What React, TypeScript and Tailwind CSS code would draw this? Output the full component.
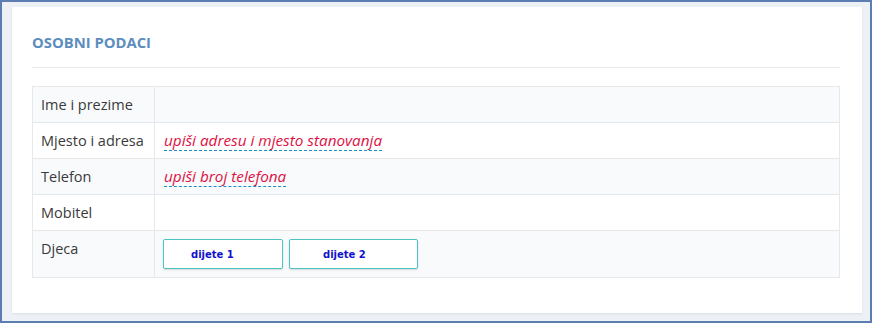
import React from 'react';

const rows = [
    { label: 'Ime i prezime', value: null },
    { label: 'Mjesto i adresa', value: 'upiši adresu i mjesto stanovanja' },
    { label: 'Telefon', value: 'upiši broj telefona' },
    { label: 'Mobitel', value: null },
];

const App: React.FC = () => {
    return (
        <div className="w-[872px] h-[323px] border-2 border-[#5b7db1] bg-[#edf1f5] pl-[10px] pt-[5px] overflow-hidden" style={{ fontFamily: '"Open Sans", sans-serif' }}>
            <div className="w-[850px] h-[306px] bg-white shadow-[0_1px_2px_rgba(0,0,0,0.08)] pl-[20px] pr-[22px] pt-[25px]">
                {/* Naslov */}
                <h2 className="text-[14.8px] leading-[20px] font-bold text-[#5b8dbe]">OSOBNI PODACI</h2>
                <div className="mt-[15px] h-px bg-[#e8ebee]" />

                {/* Tablica */}
                <table className="mt-[18px] w-full border-collapse border border-[#e6e9ec] text-[14.5px] text-[#3a3a3a]">
                    <tbody>
                        {rows.map((row, i) => (
                            <tr key={row.label} className={i % 2 === 0 ? 'bg-[#f9fafc]' : 'bg-white'}>
                                <td className="w-[122px] h-[36px] border border-[#e6e9ec] pl-[8px] leading-[20px] align-middle">{row.label}</td>
                                <td className="border border-[#e6e9ec] pl-[9px] leading-[20px] align-middle">
                                    {row.value && (
                                        <span className="italic text-[15.3px] text-[#dd1144] border-b border-dashed border-[#1a8fc0]">{row.value}</span>
                                    )}
                                </td>
                            </tr>
                        ))}
                        <tr className="bg-[#f9fafc]">
                            <td className="w-[122px] border border-[#e6e9ec] pl-[8px] pt-[8px] leading-[20px] align-top">Djeca</td>
                            <td className="border border-[#e6e9ec] pl-[8px] py-[8px] align-top">
                                <div className="flex gap-[6px]">
                                    <div className="w-[120px] h-[30px] bg-white border border-[#4cc4c4] rounded-[2px] shadow-[0_1px_2px_rgba(0,0,0,0.15)] flex items-center pl-[27px]">
                                        <span className="text-[10px] font-bold text-[#1212cc]" style={{ fontFamily: '"DejaVu Sans", sans-serif' }}>dijete 1</span>
                                    </div>
                                    <div className="w-[129px] h-[30px] bg-white border border-[#4cc4c4] rounded-[2px] shadow-[0_1px_2px_rgba(0,0,0,0.15)] flex items-center pl-[33px]">
                                        <span className="text-[10px] font-bold text-[#1212cc]" style={{ fontFamily: '"DejaVu Sans", sans-serif' }}>dijete 2</span>
                                    </div>
                                </div>
                            </td>
                        </tr>
                    </tbody>
                </table>
            </div>
        </div>
    );
};

export default App;
